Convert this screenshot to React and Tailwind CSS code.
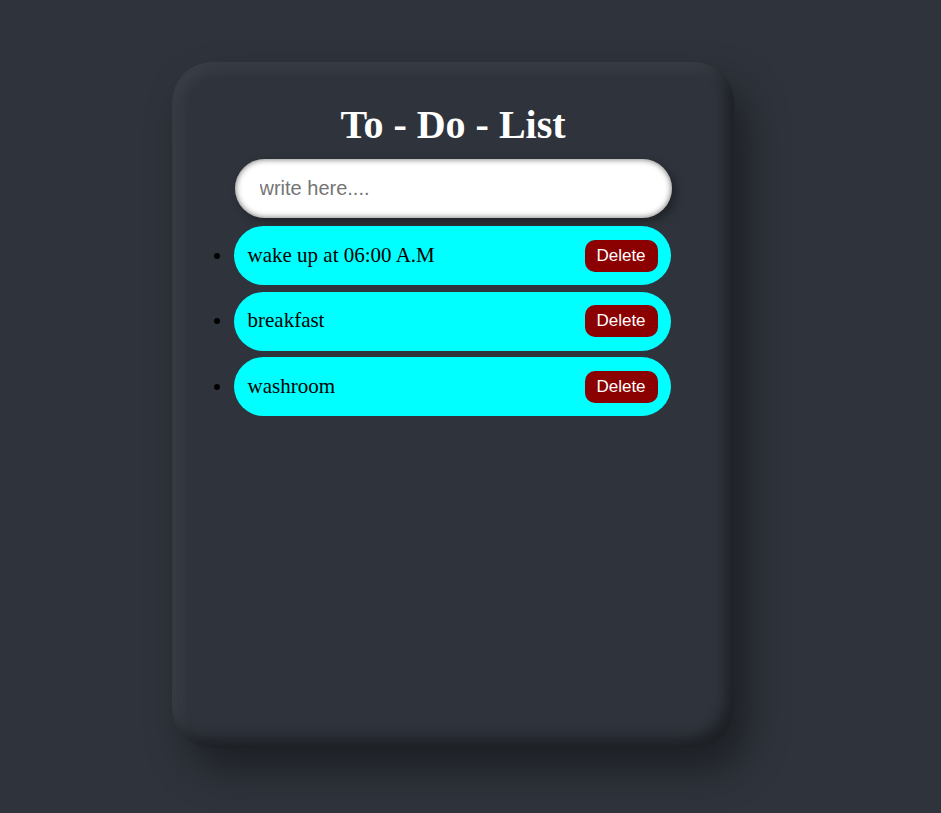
import React, { useState } from 'react';

const initialTasks = ['wake up at 06:00 A.M', 'breakfast', 'washroom'];

export default function App() {
    const [tasks, setTasks] = useState(initialTasks);
    const [text, setText] = useState('');

    const addTask = (e) => {
        if (e.key === 'Enter' && text.trim()) {
            setTasks([...tasks, text.trim()]);
            setText('');
        }
    };

    return (
        <div className="min-h-screen w-full bg-[#2f343c] pt-[62px] pl-[172px]">
            {/* Card */}
            <div className="w-[562px] h-[686px] rounded-[40px] bg-[#2f343c] flex flex-col items-center pt-[40px] shadow-[inset_8px_8px_14px_rgba(255,255,255,0.05),inset_-8px_-10px_14px_rgba(0,0,0,0.4),14px_22px_40px_rgba(0,0,0,0.4)]">
                <h1 className="text-white text-[40px] font-bold leading-[46px] font-['Liberation_Serif',serif]">
                    To - Do - List
                </h1>

                <input
                    value={text}
                    onChange={(e) => setText(e.target.value)}
                    onKeyDown={addTask}
                    placeholder="write here...."
                    className="mt-[11px] w-[437px] h-[59px] rounded-full bg-white pl-[25px] text-[20px] text-black placeholder:text-[#757575] outline-none font-['Liberation_Sans',Arial,sans-serif] shadow-[inset_0_0_6px_rgba(0,0,0,0.6),4px_4px_10px_rgba(0,0,0,0.35)]"
                />

                {/* Tasks */}
                <ul className="mt-[8px] flex flex-col gap-[6.5px] -ml-[22px]">
                    {tasks.map((task, i) => (
                        <li key={i} className="flex items-center">
                            <span className="w-[6px] h-[6px] rounded-full bg-black mr-[14px]" />
                            <div className="w-[437px] h-[59px] rounded-[30px] bg-[#00ffff] flex items-center justify-between pl-[14px] pr-[13px]">
                                <span className="text-[21px] text-black font-['Liberation_Serif',serif]">{task}</span>
                                <button
                                    onClick={() => setTasks(tasks.filter((_, j) => j !== i))}
                                    className="w-[73px] h-[32px] rounded-[10px] bg-[#8b0000] text-white text-[17px] font-['Liberation_Sans',Arial,sans-serif]"
                                >
                                    Delete
                                </button>
                            </div>
                        </li>
                    ))}
                </ul>
            </div>
        </div>
    );
}
